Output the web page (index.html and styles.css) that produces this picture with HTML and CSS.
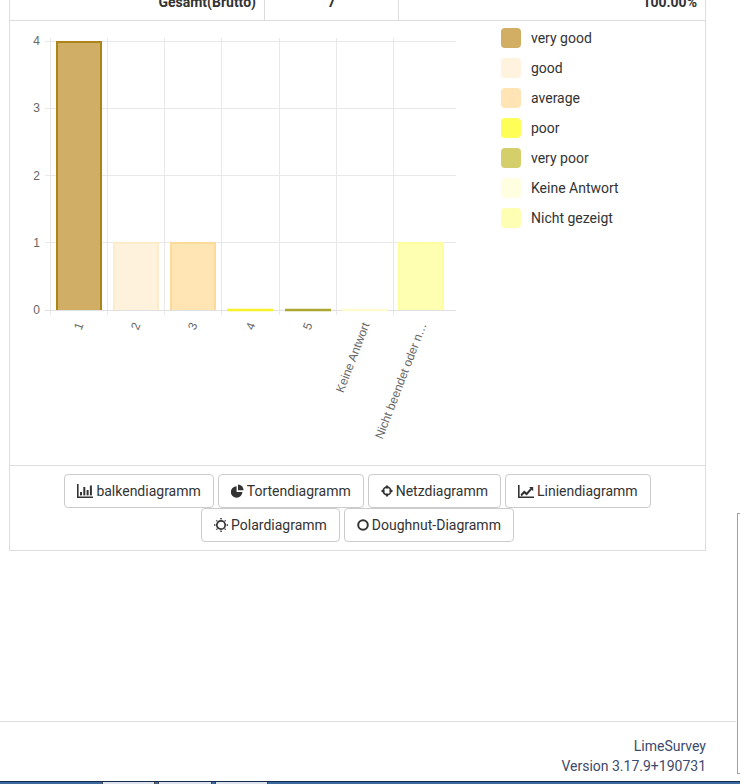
FILE: index.html
```html
<!DOCTYPE html>
<html lang="de">
<head>
<meta charset="utf-8">
<title>Statistik</title>
<link rel="stylesheet" href="styles.css">
</head>
<body>
<div class="panel">
  <div class="totals">
    <div class="cell cell-label">Gesamt(Brutto)</div>
    <div class="cell cell-count">7</div>
    <div class="cell cell-pct">100.00%</div>
  </div>
  <div class="chart-section">
    <svg class="chart" width="470" height="444" viewBox="0 0 470 444">
      <g transform="translate(-10 -21)">
        <g class="grid">
          <line x1="45" y1="41.5" x2="456" y2="41.5"/>
          <line x1="45" y1="108.5" x2="456" y2="108.5"/>
          <line x1="45" y1="175.5" x2="456" y2="175.5"/>
          <line x1="45" y1="242.5" x2="456" y2="242.5"/>
          <line x1="50.5" y1="38" x2="50.5" y2="315"/>
          <line x1="107.5" y1="38" x2="107.5" y2="315"/>
          <line x1="164.5" y1="38" x2="164.5" y2="315"/>
          <line x1="221.5" y1="38" x2="221.5" y2="315"/>
          <line x1="279.5" y1="38" x2="279.5" y2="315"/>
          <line x1="336.5" y1="38" x2="336.5" y2="315"/>
          <line x1="393.5" y1="38" x2="393.5" y2="315"/>
        </g>
        <line class="zero" x1="45" y1="310.5" x2="456" y2="310.5"/>
        <g class="ylabels">
          <text x="40" y="41">4</text>
          <text x="40" y="108">3</text>
          <text x="40" y="175.5">2</text>
          <text x="40" y="242.5">1</text>
          <text x="40" y="310">0</text>
        </g>
        <rect x="56" y="41" width="46" height="269" fill="#d1ae66"/>
        <path d="M57 310 V42 H101 V310" fill="none" stroke="#ad8418" stroke-width="2"/>
        <rect x="113" y="242" width="46" height="68" fill="#fff2dd"/>
        <path d="M114 310 V243 H158 V310" fill="none" stroke="#feebc9" stroke-width="2"/>
        <rect x="170" y="242" width="46" height="68" fill="#ffe5b3"/>
        <path d="M171 310 V243 H215 V310" fill="none" stroke="#fcda9c" stroke-width="2"/>
        <line x1="227" y1="310" x2="273" y2="310" stroke="#f7f22a" stroke-width="2.4"/>
        <line x1="285" y1="310" x2="331" y2="310" stroke="#aca730" stroke-width="2.4"/>
        <line x1="342" y1="310" x2="388" y2="310" stroke="#fffbcf" stroke-width="2.4"/>
        <rect x="398" y="242" width="46" height="68" fill="#ffffb1"/>
        <path d="M399 310 V243 H443 V310" fill="none" stroke="#fffe9e" stroke-width="2"/>
        <g class="xlabels">
          <text transform="translate(80 323) rotate(-69)">1</text>
          <text transform="translate(137 323) rotate(-69)">2</text>
          <text transform="translate(194 323) rotate(-69)">3</text>
          <text transform="translate(252 323) rotate(-69)">4</text>
          <text transform="translate(309 323) rotate(-69)">5</text>
          <text transform="translate(366 323) rotate(-69)">Keine Antwort</text>
          <text transform="translate(423 323) rotate(-69)">Nicht beendet oder n…</text>
        </g>
      </g>
    </svg>
    <ul class="legend">
      <li class="legend-item"><span class="swatch sw-vgood"></span>very good</li>
      <li class="legend-item"><span class="swatch sw-good"></span>good</li>
      <li class="legend-item"><span class="swatch sw-avg"></span>average</li>
      <li class="legend-item"><span class="swatch sw-poor"></span>poor</li>
      <li class="legend-item"><span class="swatch sw-vpoor"></span>very poor</li>
      <li class="legend-item"><span class="swatch sw-none"></span>Keine Antwort</li>
      <li class="legend-item"><span class="swatch sw-hidden"></span>Nicht gezeigt</li>
    </ul>
  </div>
  <div class="buttons">
    <div class="btn-row">
      <button class="btn" type="button">
        <svg class="ico" width="16" height="14" viewBox="0 0 16 14"><path d="M0 0h1.6v12.4H16V14H0z"/><rect x="3" y="8" width="2" height="3.4"/><rect x="6.3" y="3" width="2" height="8.4"/><rect x="9.6" y="6" width="2" height="5.4"/><rect x="12.9" y="1.5" width="2" height="9.9"/></svg>
        balkendiagramm
      </button>
      <button class="btn" type="button">
        <svg class="ico" width="13" height="14" viewBox="0 0 13 14"><path d="M5.6 2.2A5.8 5.8 0 1 0 11.4 8H5.6z"/><path d="M7 0.6A5.8 5.8 0 0 1 12.6 6.2H7z"/></svg>
        Tortendiagramm
      </button>
      <button class="btn" type="button">
        <svg class="ico" width="12" height="14" viewBox="0 0 12 14"><circle cx="6" cy="7" r="3.8" fill="none" stroke="#333" stroke-width="1.8"/><path d="M5 1.5h2v3H5zM5 9.5h2v3H5zM0.5 6h3v2h-3zM8.5 6h3v2h-3z"/></svg>
        Netzdiagramm
      </button>
      <button class="btn" type="button">
        <svg class="ico" width="16" height="14" viewBox="0 0 16 14"><path d="M0 1h1.6v11.4H16V14H0z"/><path d="M2.6 10.2L6.2 6.4 8.6 8.6 12.4 4.2 11 3h4.2v4.2l-1.4-1.4-5.1 5.8-2.4-2.2-2.8 3z"/></svg>
        Liniendiagramm
      </button>
    </div>
    <div class="btn-row">
      <button class="btn" type="button">
        <svg class="ico" width="14" height="14" viewBox="0 0 14 14"><circle cx="7" cy="7" r="4.2" fill="none" stroke="#333" stroke-width="1.7"/><path d="M6 0h2l-1 2.2zM6 14h2l-1-2.2zM0 6v2l2.2-1zM14 6v2l-2.2-1zM1.7 3.1l1.4-1.4 0.6 2zM12.3 10.9l-1.4 1.4-0.6-2zM10.9 1.7l1.4 1.4-2 0.6zM3.1 12.3l-1.4-1.4 2-0.6z"/></svg>
        Polardiagramm
      </button>
      <button class="btn" type="button">
        <svg class="ico" width="12" height="14" viewBox="0 0 12 14"><circle cx="6" cy="7" r="4.8" fill="none" stroke="#333" stroke-width="2"/></svg>
        Doughnut-Diagramm
      </button>
    </div>
  </div>
</div>
<footer class="footer">
  <div class="footer-line">LimeSurvey</div>
  <div class="footer-line">Version 3.17.9+190731</div>
</footer>
<div class="side-peek"></div>
<div class="taskbar">
  <span class="task task-1"></span>
  <span class="task task-2"></span>
  <span class="task task-3"></span>
</div>
</body>
</html>
```

FILE: styles.css
```css
html, body {
  margin: 0;
  padding: 0;
  background: #fff;
}
body {
  width: 740px;
  height: 784px;
  overflow: hidden;
  position: relative;
  font-family: Roboto, "Liberation Sans", Arial, sans-serif;
  font-size: 14px;
  line-height: 20px;
  color: #333;
}
.panel {
  margin: -16px 0 0 9px;
  width: 697px;
  box-sizing: border-box;
  border-left: 1px solid #ddd;
  border-right: 1px solid #ddd;
  border-bottom: 1px solid #ddd;
}
.totals {
  display: grid;
  grid-template-columns: 254px 134px 1fr;
  border-bottom: 1px solid #ddd;
  font-weight: bold;
}
.cell {
  padding: 8px;
}
.cell-label {
  text-align: right;
}
.cell-count {
  text-align: center;
  border-left: 1px solid #ddd;
}
.cell-pct {
  text-align: right;
  border-left: 1px solid #ddd;
}
.chart-section {
  display: flex;
  height: 444px;
}
.chart {
  display: block;
  flex: none;
}
.grid line {
  stroke: #e8e8e8;
  stroke-width: 1;
}
.zero {
  stroke: #e0e0e0;
  stroke-width: 1;
}
.ylabels text {
  font-family: "Liberation Sans", Arial, sans-serif;
  font-size: 12px;
  fill: #666;
  text-anchor: end;
  dominant-baseline: central;
}
.xlabels text {
  font-family: "Liberation Sans", Arial, sans-serif;
  font-size: 12px;
  fill: #666;
  text-anchor: end;
  dominant-baseline: central;
}
.legend {
  list-style: none;
  margin: 0 0 0 21px;
  padding: 7px 0 0;
}
.legend-item {
  display: flex;
  align-items: center;
  height: 20px;
  margin-bottom: 10px;
  color: #333;
}
.swatch {
  width: 20px;
  height: 20px;
  border-radius: 4px;
  margin-right: 10px;
  flex: none;
}
.sw-vgood { background: #d2ae65; }
.sw-good { background: #fff3e0; }
.sw-avg { background: #ffe5b5; }
.sw-poor { background: #ffff5a; }
.sw-vpoor { background: #d5cf6b; }
.sw-none { background: #fffee0; }
.sw-hidden { background: #ffffb3; }
.buttons {
  border-top: 1px solid #ddd;
  padding: 8px 0;
}
.btn-row {
  display: flex;
  justify-content: center;
  gap: 4px;
}
.btn {
  display: inline-flex;
  align-items: center;
  gap: 3px;
  margin: 0;
  padding: 6px 12px;
  height: 34px;
  box-sizing: border-box;
  border: 1px solid #ccc;
  border-radius: 4px;
  background: #fff;
  font-family: Roboto, "Liberation Sans", Arial, sans-serif;
  font-size: 14px;
  line-height: 20px;
  color: #333;
  white-space: nowrap;
}
.ico {
  display: block;
  flex: none;
  fill: #333;
}
.footer {
  margin-top: 170px;
  width: 736px;
  box-sizing: border-box;
  border-top: 1px solid #ddd;
  padding: 14px 30px 0 0;
  text-align: right;
  color: #3d4a6b;
}
.footer-line {
  height: 20px;
}
.side-peek {
  position: absolute;
  left: 737px;
  top: 513px;
  width: 10px;
  height: 259px;
  border: 1px solid #a0a0a0;
  background: #fff;
}
.taskbar {
  position: absolute;
  left: 0;
  top: 781px;
  width: 740px;
  height: 3px;
  background: #3a6aa0;
  border-top: 1px solid #16294a;
  box-sizing: border-box;
}
.task {
  position: absolute;
  top: 0;
  height: 3px;
  background: #dde3ec;
  border-left: 1px solid #444;
  border-right: 1px solid #444;
  box-sizing: border-box;
}
.task-1 { left: 102px; width: 53px; }
.task-2 { left: 158px; width: 54px; }
.task-3 { left: 215px; width: 53px; }
```
